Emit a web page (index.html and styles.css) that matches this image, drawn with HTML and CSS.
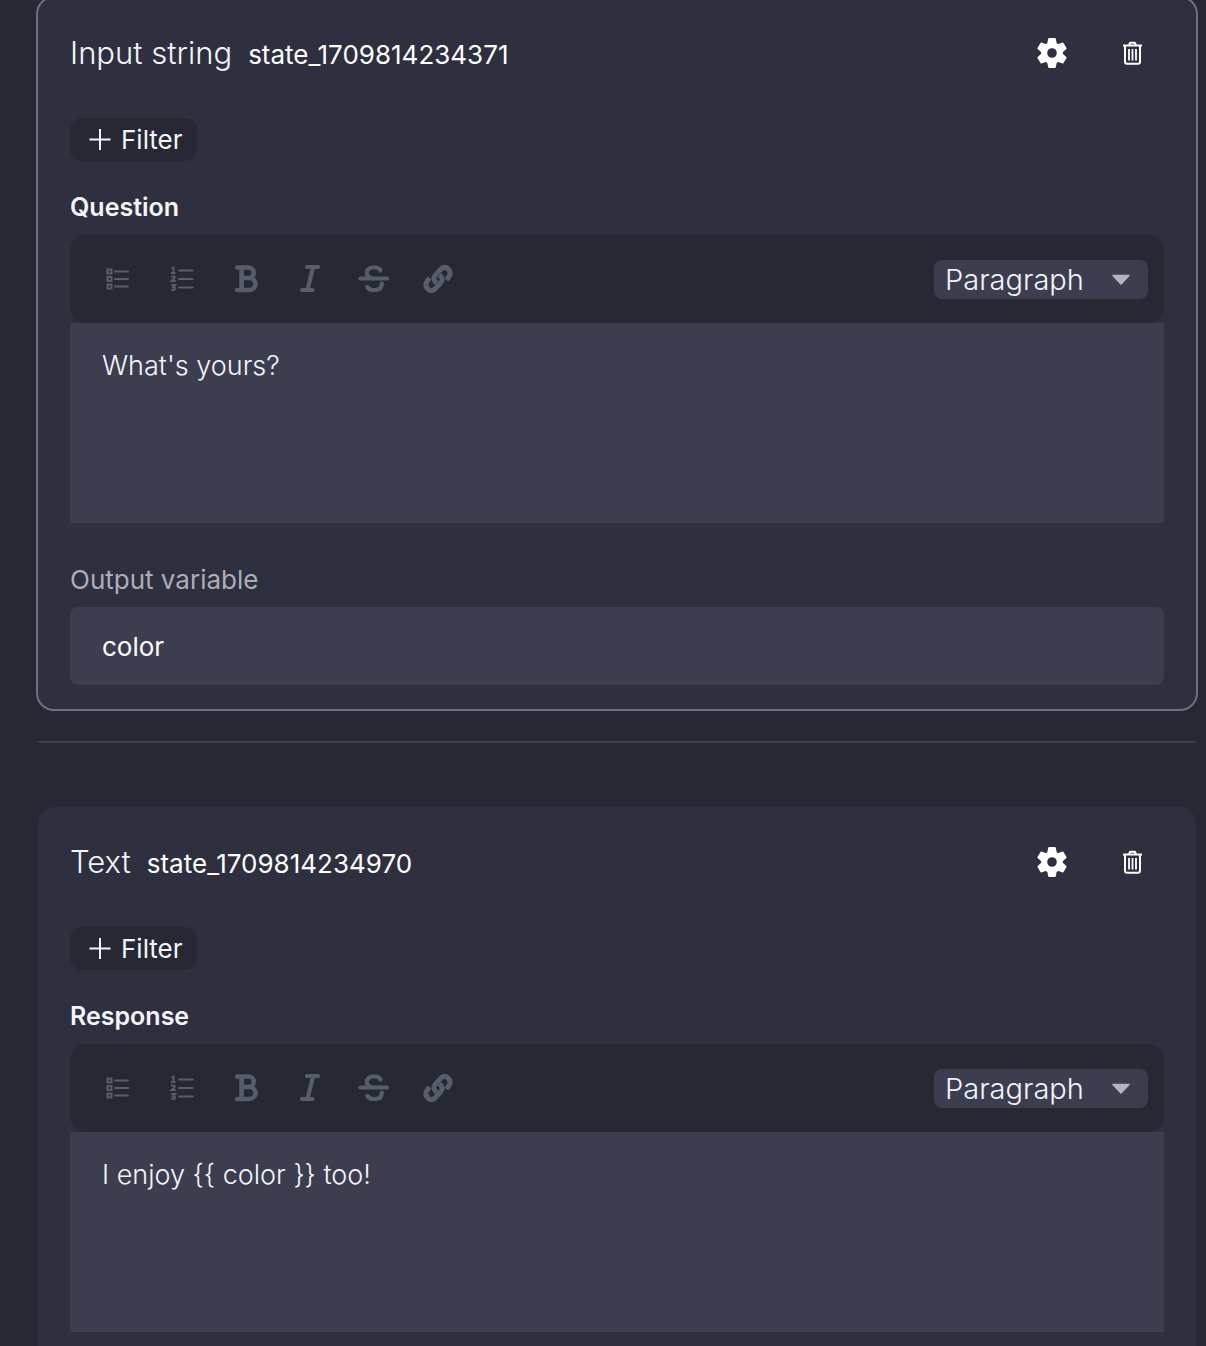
FILE: index.html
```html
<!DOCTYPE html>
<html lang="en">
<head>
<meta charset="utf-8">
<meta name="viewport" content="width=device-width, initial-scale=1">
<title>States</title>
<link rel="stylesheet" href="styles.css">
</head>
<body>
<svg class="sprite" aria-hidden="true">
  <symbol id="gear" viewBox="0 0 32 32">
    <mask id="gear-hole"><rect width="32" height="32" fill="#fff"/><circle cx="16" cy="16" r="4.8" fill="#000"/></mask>
    <g mask="url(#gear-hole)" fill="currentColor" stroke="currentColor" stroke-width="1.6" stroke-linejoin="round">
      <circle cx="16" cy="16" r="10"/>
      <path id="teeth" d="M13 1.8h6l1 5v18.400l-1 5h-6l-1-5V6.800z"/>
      <use href="#teeth" transform="rotate(60 16 16)"/>
      <use href="#teeth" transform="rotate(120 16 16)"/>
    </g>
  </symbol>
  <symbol id="trash" viewBox="0 0 24 24">
    <g fill="none" stroke="currentColor" stroke-width="2">
      <path d="M3 4.500h19M5 4.500v16.200q0 2 2 2h11q2 0 2-2V4.500M9.500 4.200V3q0-1.300 1.300-1.300h3.400q1.300 0 1.300 1.300v1.200"/>
      <path d="M9 8v11.500M12.500 8v11.500M16 8v11.500" stroke-width="1.800"/>
    </g>
  </symbol>
  <symbol id="plus" viewBox="0 0 24 24"><path d="M12 1v21M1.500 11.500h21" stroke="currentColor" stroke-width="2"/></symbol>
  <symbol id="bullets" viewBox="0 0 32 32">
    <g fill="none" stroke="currentColor" stroke-width="2">
      <path d="M5.500 6.500h4v4h-4zM5.500 14h4v4h-4zM5.500 21.500h4v4h-4z"/>
      <path d="M13 8.500h13M13 16h13M13 23.500h13" stroke-linecap="round"/>
    </g>
  </symbol>
  <symbol id="numbers" viewBox="0 0 32 32">
    <g fill="none" stroke="currentColor" stroke-width="1.900">
      <path d="M5.500 5.500L7.500 4.500v6M5 10h4.500M5.200 14q2-1.500 3.500 0 .5 1.300-3 4h4M5.200 22h4l-2 2.200q2.300 0 2 1.800-1.200 1.700-4 .5"/>
      <path d="M13 7.500h13.500M13 16h13.500M13 24.500h13.500" stroke-width="2" stroke-linecap="round"/>
    </g>
  </symbol>
  <symbol id="bold" viewBox="0 0 32 32">
    <path d="M7.200 4.500H18.500a5 5 0 0 1 0 10.500H12M18.500 15h1a6 6 0 0 1 0 12H7.200M11.600 4.500V27" fill="none" stroke="currentColor" stroke-width="4.600" stroke-linecap="round" stroke-linejoin="round"/>
  </symbol>
  <symbol id="italic" viewBox="0 0 32 32">
    <path d="M13 4H24M8 27h10.500M19 4.500L13.500 27" fill="none" stroke="currentColor" stroke-width="4.200" stroke-linecap="round"/>
  </symbol>
  <symbol id="strike" viewBox="0 0 32 32">
    <g fill="none" stroke="currentColor" stroke-width="4.200" stroke-linecap="round">
      <path d="M22.500 7.500Q21 4.500 17.500 4.500h-2.500Q8.800 5 8.800 9.800q0 4 5.200 5.700M9.300 24q2 3 6 3h2.500q6-.5 6-6.500M2.500 15.500h26.500"/>
    </g>
  </symbol>
  <symbol id="link" viewBox="0 0 32 32">
    <g fill="none" stroke="currentColor" stroke-width="5">
      <path d="M17.300 11.800q5 4 1 8.600l-5.300 5.600q-3.500 3-7 .2-4.300-4 0-9.200l1.700-2"/>
      <path d="M14.700 20.200q-5-4-1-8.600l5.300-5.600q3.500-3 7-.2 4.300 4 0 9.200l-1.700 2"/>
    </g>
  </symbol>
</svg>

<main class="states">
  <section class="card card--selected">
    <header class="card__header">
      <h2 class="card__title">Input string</h2>
      <span class="card__name">state_1709814234371</span>
      <div class="card__actions">
        <button class="icon-button" type="button" aria-label="Settings"><svg class="icon"><use href="#gear"/></svg></button>
        <button class="icon-button" type="button" aria-label="Delete"><svg class="icon icon--small"><use href="#trash"/></svg></button>
      </div>
    </header>
    <button class="filter" type="button"><svg class="icon icon--small"><use href="#plus"/></svg>Filter</button>
    <label class="label label--strong" for="question">Question</label>
    <div class="toolbar">
      <button class="icon-button" type="button" aria-label="Bulleted list"><svg class="icon"><use href="#bullets"/></svg></button>
      <button class="icon-button" type="button" aria-label="Numbered list"><svg class="icon"><use href="#numbers"/></svg></button>
      <button class="icon-button" type="button" aria-label="Bold"><svg class="icon"><use href="#bold"/></svg></button>
      <button class="icon-button" type="button" aria-label="Italic"><svg class="icon"><use href="#italic"/></svg></button>
      <button class="icon-button" type="button" aria-label="Strikethrough"><svg class="icon"><use href="#strike"/></svg></button>
      <button class="icon-button" type="button" aria-label="Link"><svg class="icon"><use href="#link"/></svg></button>
      <div class="select">
        <select class="select__box" aria-label="Text style"><option>Paragraph</option></select>
        <svg class="select__arrow" viewBox="0 0 20 12"><path d="M2 1.500h16L10 10z" fill="currentColor" stroke="currentColor" stroke-width="1.500" stroke-linejoin="round"/></svg>
      </div>
    </div>
    <textarea class="editor" id="question">What's yours?</textarea>
    <label class="label label--output" for="output">Output variable</label>
    <input class="field" id="output" type="text" value="color">
  </section>

  <hr class="divider">

  <section class="card card--last">
    <header class="card__header">
      <h2 class="card__title">Text</h2>
      <span class="card__name">state_1709814234970</span>
      <div class="card__actions">
        <button class="icon-button" type="button" aria-label="Settings"><svg class="icon"><use href="#gear"/></svg></button>
        <button class="icon-button" type="button" aria-label="Delete"><svg class="icon icon--small"><use href="#trash"/></svg></button>
      </div>
    </header>
    <button class="filter" type="button"><svg class="icon icon--small"><use href="#plus"/></svg>Filter</button>
    <label class="label label--strong" for="response">Response</label>
    <div class="toolbar">
      <button class="icon-button" type="button" aria-label="Bulleted list"><svg class="icon"><use href="#bullets"/></svg></button>
      <button class="icon-button" type="button" aria-label="Numbered list"><svg class="icon"><use href="#numbers"/></svg></button>
      <button class="icon-button" type="button" aria-label="Bold"><svg class="icon"><use href="#bold"/></svg></button>
      <button class="icon-button" type="button" aria-label="Italic"><svg class="icon"><use href="#italic"/></svg></button>
      <button class="icon-button" type="button" aria-label="Strikethrough"><svg class="icon"><use href="#strike"/></svg></button>
      <button class="icon-button" type="button" aria-label="Link"><svg class="icon"><use href="#link"/></svg></button>
      <div class="select">
        <select class="select__box" aria-label="Text style"><option>Paragraph</option></select>
        <svg class="select__arrow" viewBox="0 0 20 12"><path d="M2 1.500h16L10 10z" fill="currentColor" stroke="currentColor" stroke-width="1.500" stroke-linejoin="round"/></svg>
      </div>
    </div>
    <textarea class="editor" id="response">I enjoy {{ color }} too!</textarea>
  </section>
</main>
</body>
</html>
```
FILE: styles.css
```css
:root {
  --page: #262834;
  --card: #2e303f;
  --input: #3c3e50;
  --outline: #6d7082;
  --tool: #565e6c;
  --text: #f4f5fa;
}

* {
  box-sizing: border-box;
}

body {
  margin: 0;
  background: var(--page);
  color: var(--text);
  font-family: Inter, "Liberation Sans", sans-serif;
}

button,
select,
input,
textarea {
  margin: 0;
  border: 0;
  color: inherit;
  font: inherit;
}

.sprite {
  position: absolute;
  width: 0;
  height: 0;
}

.states {
  display: flex;
  flex-direction: column;
  min-height: 100vh;
  padding: 0 10px 0 38px;
}

.card {
  display: flex;
  flex-direction: column;
  padding: 32px 32px 24px;
  border-radius: 16px;
  background: var(--card);
}

.card--selected {
  margin-top: -2px;
  box-shadow: 0 0 0 2px var(--outline);
}

.card--last {
  flex: 1;
  padding-bottom: 8px;
  border-radius: 16px 16px 0 0;
}

.card__header {
  display: flex;
  align-items: center;
  gap: 16px;
  height: 46px;
  margin-bottom: 42px;
}

.card__title {
  margin: 0;
  font-size: 31px;
  font-weight: 300;
  line-height: 46px;
}

.card__name {
  padding-top: 2px;
  color: #fff;
  font-size: 26px;
}

.card__actions {
  display: flex;
  gap: 16px;
  margin-left: auto;
  color: #fff;
}

.icon-button {
  display: flex;
  align-items: center;
  justify-content: center;
  width: 64px;
  height: 48px;
  padding: 0;
  background: none;
}

.icon {
  width: 32px;
  height: 32px;
}

.icon--small {
  width: 24px;
  height: 24px;
}

.filter {
  display: flex;
  align-items: center;
  align-self: flex-start;
  gap: 9px;
  height: 43px;
  margin-bottom: 28px;
  padding: 0 14px 0 18px;
  border-radius: 12px;
  background: var(--page);
  font-size: 26px;
}

.label {
  margin-bottom: 9px;
  font-size: 25px;
  line-height: 37px;
}

.label--strong {
  font-weight: 600;
}

.label--output {
  margin-top: 38px;
  color: #acadb8;
  font-size: 26px;
}

.toolbar {
  display: flex;
  align-items: center;
  height: 88px;
  padding: 0 16px;
  border-radius: 16px;
  background: var(--page);
  color: var(--tool);
}

.select {
  position: relative;
  width: 214px;
  margin-left: auto;
}

.select__box {
  display: block;
  width: 100%;
  height: 39px;
  padding: 0 48px 0 11px;
  border-radius: 8px;
  background: var(--input);
  color: var(--text);
  font-size: 29px;
  font-weight: 300;
  appearance: none;
}

.select__arrow {
  position: absolute;
  top: 14px;
  right: 17px;
  width: 20px;
  height: 12px;
  color: #b4b5c2;
  pointer-events: none;
}

.editor {
  display: block;
  height: 200px;
  padding: 25px 32px;
  background: var(--input);
  font-size: 27px;
  font-weight: 300;
  line-height: 36px;
  resize: none;
}

.field {
  height: 78px;
  padding: 0 32px;
  border-radius: 8px;
  background: var(--input);
  color: #fff;
  font-size: 26px;
}

.divider {
  width: 100%;
  height: 2px;
  margin: 32px 0 64px;
  border: 0;
  background: var(--input);
}
```
